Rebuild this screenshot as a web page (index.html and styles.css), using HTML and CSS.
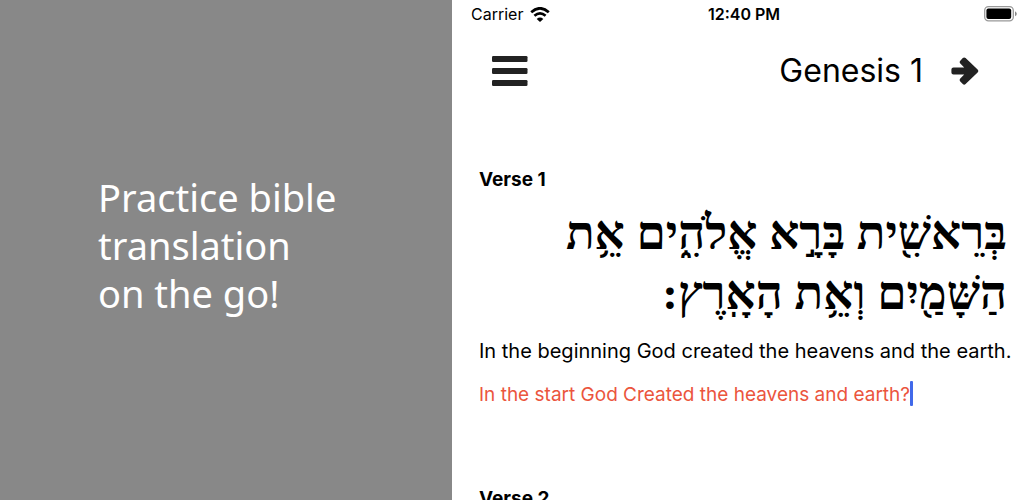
FILE: index.html
```
<!DOCTYPE html>
<html lang="en">
<head>
<meta charset="utf-8">
<meta name="viewport" content="width=device-width, initial-scale=1">
<title>Practice bible translation</title>
<link rel="stylesheet" href="styles.css">
</head>
<body>
<div class="banner">
  <section class="promo">
    <h1 class="promo-title">Practice bible<br>translation<br>on the go!</h1>
  </section>
  <main class="phone">
    <div class="status">
      <div class="carrier">
        <span>Carrier</span>
        <svg class="wifi" viewBox="0 0 20 15" aria-hidden="true">
          <path d="M1.2 5.2Q10-2.6 18.8 5.2M4.4 8.8Q10 4 15.6 8.8" fill="none" stroke="#000" stroke-width="2.7"/>
          <path d="M10 15 6.7 11.9Q10 9.1 13.3 11.9Z"/>
        </svg>
      </div>
      <time class="clock">12:40 PM</time>
      <svg class="battery" viewBox="0 0 33 16" aria-hidden="true">
        <rect x=".7" y=".7" width="28.6" height="14.2" rx="3.8" fill="none" stroke="#999" stroke-width="1.3"/>
        <rect x="2.4" y="2.5" width="24.8" height="10.6" rx="2"/>
        <path d="M31 5.3q1.8 1 1.8 2.5T31 10.3Z" fill="#888"/>
      </svg>
    </div>
    <header class="toolbar">
      <button class="icon-button" type="button" aria-label="Menu">
        <svg class="menu-icon" viewBox="0 0 36 30" aria-hidden="true">
          <rect width="35.5" height="6" rx="1.3"/><rect y="12" width="35.5" height="6" rx="1.3"/><rect y="24" width="35.5" height="6" rx="1.3"/>
        </svg>
      </button>
      <h2 class="chapter">Genesis 1</h2>
      <button class="icon-button" type="button" aria-label="Next chapter">
        <svg class="arrow-icon" viewBox="0 0 28 28" aria-hidden="true">
          <path d="M2.5 10.5H13.2L9.3 6.5Q8 5.1 9.3 3.7L11.8 1.1Q13.2-.2 14.6 1.1L26.6 12.6Q28 14 26.6 15.4L14.6 27Q13.2 28.3 11.8 27L9.3 24.4Q8 23 9.3 21.6L13.2 17.6H2.5Q.4 17.6.4 15.5V12.6Q.4 10.5 2.5 10.5Z"/>
        </svg>
      </button>
    </header>
    <article class="verse">
      <h3 class="verse-title">Verse 1</h3>
      <p class="hebrew" lang="he" dir="rtl">בְּרֵאשִׁ֖ית בָּרָ֣א אֱלֹהִ֑ים אֵ֥ת<br>הַשָּׁמַ֖יִם וְאֵ֥ת הָאָֽרֶץ:</p>
      <p class="english">In the beginning God created the heavens and the earth.</p>
      <div class="answer">
        <input class="answer-input" type="text" aria-label="Your translation of verse 1" value="In the start God Created the heavens and earth?">
        <span class="caret"></span>
      </div>
    </article>
    <article class="verse">
      <h3 class="verse-title">Verse 2</h3>
    </article>
  </main>
</div>
</body>
</html>
```
FILE: styles.css
```
* { box-sizing: border-box; }
body { margin: 0; background: #fff; color: #000; font-family: Inter, "Liberation Sans", sans-serif; }
h1, h2, h3, p { margin: 0; font-weight: 400; }
.banner { display: grid; grid-template-columns: 113fr 143fr; height: 100vh; overflow: hidden; }
.promo { display: flex; flex-direction: column; justify-content: center; background: #888; color: #fff; padding: 0 32px 46px 98px; }
.promo-title { font: 400 38px/48px "Noto Sans", "Open Sans", sans-serif; white-space: nowrap; }
.phone { min-width: 0; }
.status { display: grid; grid-template-columns: 1fr auto 1fr; align-items: center; height: 28px; padding: 0 7px 0 19px; font-size: 16px; }
.carrier { display: flex; align-items: center; gap: 7px; }
.wifi { width: 20px; height: 15px; }
.clock { font-weight: 600; }
.battery { width: 33px; height: 16px; justify-self: end; }
.toolbar { display: flex; align-items: center; height: 86px; padding: 0 45px 0 40px; }
.icon-button { display: flex; padding: 0; border: 0; background: none; fill: #222; cursor: pointer; }
.menu-icon { width: 36px; height: 30px; }
.arrow-icon { width: 28px; height: 28px; }
.chapter { margin: 0 28px 0 auto; font-size: 32px; line-height: 40px; }
.verse { padding: 54px 17px 24px 27px; }
.verse-title { font-size: 19px; line-height: 24px; font-weight: 700; }
.hebrew { padding-top: 11px; font: 700 47px/60px "Liberation Serif", serif; white-space: nowrap; }
.english { padding-top: 14px; font-size: 20px; line-height: 28px; white-space: nowrap; }
.answer { display: flex; align-items: flex-start; padding-top: 16px; }
.answer-input { field-sizing: content; padding: 0; border: 0; outline: 0; background: none; color: #eb553d; font: 400 19px/28px Inter, "Liberation Sans", sans-serif; }
.caret { width: 3px; height: 25px; border-radius: 1px; background: #4169ea; }
```
